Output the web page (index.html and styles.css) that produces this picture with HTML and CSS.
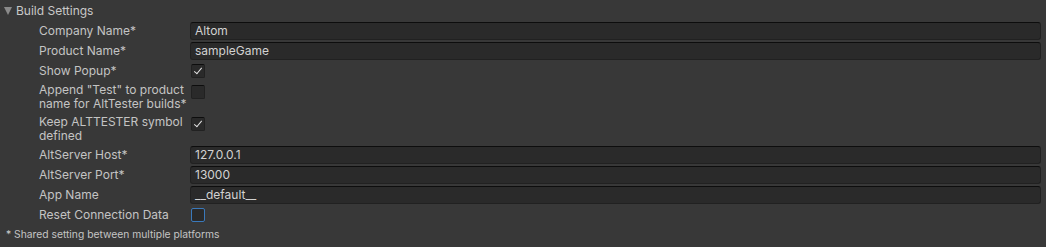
FILE: index.html
```html
<!doctype html>
<html>
  <head>
    <title>Build Settings</title>
    <link rel="stylesheet" href="styles.css">
  </head>
  <body>
    <div id="panel">
      <div class="foldout"><span class="arrow"></span>Build Settings</div>
      <div class="row">
        <div class="label">Company Name*</div>
        <div class="field">Altom</div>
      </div>
      <div class="row">
        <div class="label">Product Name*</div>
        <div class="field">sampleGame</div>
      </div>
      <div class="row">
        <div class="label">Show Popup*</div>
        <div class="check checked"></div>
      </div>
      <div class="row tall">
        <div class="label">Append "Test" to product name for AltTester builds*</div>
        <div class="check"></div>
      </div>
      <div class="row tall">
        <div class="label">Keep ALTTESTER symbol defined</div>
        <div class="check checked"></div>
      </div>
      <div class="row">
        <div class="label">AltServer Host*</div>
        <div class="field">127.0.0.1</div>
      </div>
      <div class="row">
        <div class="label">AltServer Port*</div>
        <div class="field">13000</div>
      </div>
      <div class="row">
        <div class="label">App Name</div>
        <div class="field">__default__</div>
      </div>
      <div class="row">
        <div class="label">Reset Connection Data</div>
        <div class="check focused"></div>
      </div>
      <div class="note">* Shared setting between multiple platforms</div>
    </div>
  </body>
</html>
```

FILE: styles.css
```css
body {
  margin: 0;
  background-color: #383838;
  font-family: Inter, "Liberation Sans", sans-serif;
  font-size: 12px;
  color: #c4c4c4;
}

div#panel {
  padding: 2px 5px 0 0;
}

div.foldout {
  height: 18px;
  line-height: 18px;
  padding-left: 4px;
  color: #c8c8c8;
  display: flex;
  align-items: center;
}

span.arrow {
  width: 0;
  height: 0;
  border-left: 4px solid transparent;
  border-right: 4px solid transparent;
  border-top: 8px solid #8a8a8a;
  margin-right: 4px;
}

div.row {
  display: flex;
  min-height: 18px;
  margin-top: 2px;
  padding-left: 39px;
}

div.label {
  width: 151px;
  flex-shrink: 0;
  line-height: 18px;
  color: #c4c4c4;
}

div.row.tall div.label {
  line-height: 14px;
  padding: 1px 0;
  width: 148px;
  margin-right: 3px;
}

div.field {
  flex: 1;
  height: 16px;
  line-height: 16px;
  padding-left: 4px;
  background-color: #2a2a2a;
  border: 1px solid #212121;
  border-top-color: #0d0d0d;
  border-radius: 3px;
  color: #d2d2d2;
}

div.check {
  width: 12px;
  height: 12px;
  margin-top: 2px;
  margin-left: 1px;
  background-color: #2a2a2a;
  border: 1px solid #212121;
  border-top-color: #0d0d0d;
  border-radius: 2px;
  position: relative;
}

div.row.tall div.check {
  margin-top: 3px;
}

div.check.checked::after {
  content: "";
  position: absolute;
  left: 4px;
  top: 1px;
  width: 3px;
  height: 7px;
  border-right: 1.5px solid #e4e4e4;
  border-bottom: 1.5px solid #e4e4e4;
  transform: rotate(40deg);
}

div.check.focused {
  border-color: #3a79bb;
}

div.note {
  margin-top: 2px;
  padding-left: 6px;
  height: 16px;
  line-height: 16px;
  font-size: 10.3px;
  color: #c4c4c4;
}
```
